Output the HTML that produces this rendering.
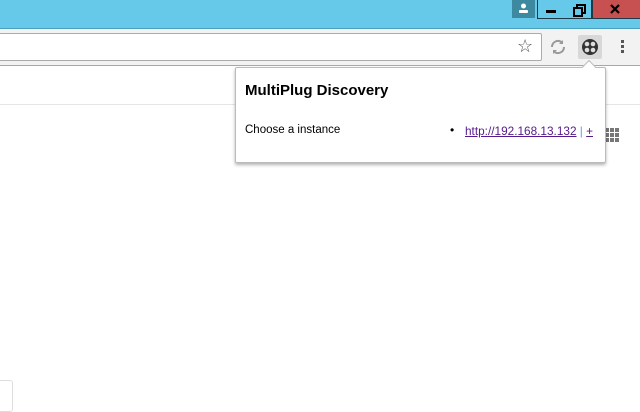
<!DOCTYPE html>
<html><head><style>
body{margin:0;width:640px;height:400px;overflow:hidden;position:relative;background:#fff;font-family:"Liberation Sans",sans-serif}
.a{position:absolute}
</style></head><body>
<div class="a" style="left:0;top:0;width:640px;height:28px;background:#66c9ea;border-bottom:1px solid #4a9fbd"></div>
<div class="a" style="left:512px;top:0;width:23px;height:18px;background:#3d8aa0"></div>
<svg class="a" style="left:518px;top:3px" width="11" height="11"><circle cx="5.5" cy="3" r="2.5" fill="#fff"/><rect x="1" y="7" width="9" height="3" rx="1" fill="#fff"/></svg>
<div class="a" style="left:537px;top:0;width:27px;height:18px;border:1px solid #1e3a48;border-top:none;background:#66c9ea"></div>
<div class="a" style="left:546px;top:10px;width:10px;height:3px;background:#000"></div>
<div class="a" style="left:565px;top:0;width:26px;height:18px;border:1px solid #1e3a48;border-top:none;border-left:none;background:#66c9ea"></div>
<div class="a" style="left:576px;top:4px;width:6px;height:6px;border:2px solid #000"></div>
<div class="a" style="left:573px;top:7px;width:6px;height:6px;border:2px solid #000;background:#66c9ea"></div>
<div class="a" style="left:592px;top:0;width:48px;height:18px;border-bottom:1px solid #1e3a48;border-left:1px solid #1e3a48;background:#c75050"></div>
<svg class="a" style="left:610px;top:4px" width="10" height="10"><path d="M1 1L9 9M9 1L1 9" stroke="#000" stroke-width="2.2"/></svg>
<div class="a" style="left:0;top:29px;width:640px;height:36px;background:#f2f2f2;border-bottom:1px solid #a8a8a8"></div>
<div class="a" style="left:-5px;top:33px;width:545px;height:26px;background:#fff;border:1px solid #ababab;border-radius:2px"></div>
<div class="a" style="left:517px;top:36px;font-size:18px;color:#555">☆</div>
<svg class="a" style="left:549px;top:38px" width="18" height="18" viewBox="0 0 18 18"><path d="M3 9a6 6 0 0 1 10-4.5M15 9a6 6 0 0 1-10 4.5" stroke="#999" stroke-width="2" fill="none"/><path d="M14 2v4h-4zM4 16v-4h4z" fill="#999"/></svg>
<div class="a" style="left:578px;top:35px;width:24px;height:24px;background:#d8d8d8;border-radius:2px"></div>
<svg class="a" style="left:581px;top:38px" width="18" height="18" viewBox="0 0 18 18"><circle cx="9" cy="9" r="8" fill="#333"/><circle cx="6" cy="6" r="2.3" fill="#ddd"/><circle cx="12" cy="6" r="2.3" fill="#ddd"/><circle cx="6" cy="12" r="2.3" fill="#ddd"/><circle cx="12" cy="12" r="2.3" fill="#ddd"/></svg>
<div class="a" style="left:621px;top:40px;width:3px;height:3px;background:#555;box-shadow:0 5px #555,0 10px #555"></div>
<div class="a" style="left:0;top:104px;width:640px;height:1px;background:#e5e5e5"></div>
<div class="a" style="left:605px;top:128px;width:14px;height:14px;background:repeating-linear-gradient(90deg,#777 0 4px,transparent 4px 5px);-webkit-mask:repeating-linear-gradient(0deg,#000 0 4px,transparent 4px 5px)"></div>
<div class="a" style="left:235px;top:67px;width:369px;height:94px;background:#fff;border:1px solid #bbb;border-radius:2px;box-shadow:0 2px 3px rgba(0,0,0,.3)"></div>
<div class="a" style="left:584px;top:62px;width:9px;height:9px;background:#fff;border-left:1px solid #bbb;border-top:1px solid #bbb;transform:rotate(45deg)"></div>
<div class="a" style="left:245px;top:82px;font-size:15px;font-weight:bold;color:#000">MultiPlug Discovery</div>
<div class="a" style="left:245px;top:124px;font-size:11.5px;color:#000">Choose a instance</div>
<div class="a" style="left:450px;top:123px;font-size:12px;color:#000">•</div>
<div class="a" style="left:465px;top:124px;font-size:11.8px;color:#551a8b"><u>http://192.168.13.132</u> <span style="color:#4af">|</span> <u>+</u></div>
<div class="a" style="left:-4px;top:380px;width:15px;height:30px;border:1px solid #ddd;border-radius:3px"></div>
</body></html>
